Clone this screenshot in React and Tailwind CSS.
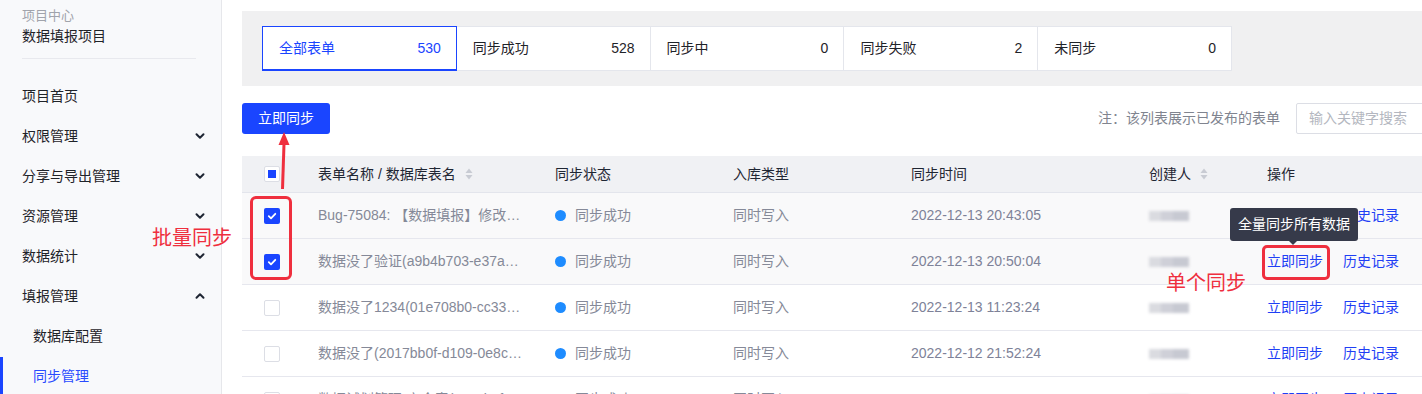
import { useState } from "react";

const FONT = { fontFamily: '"Liberation Sans", "Noto Sans CJK SC", sans-serif' };

const tabs = [
  { label: "全部表单", count: 530 },
  { label: "同步成功", count: 528 },
  { label: "同步中", count: 0 },
  { label: "同步失败", count: 2 },
  { label: "未同步", count: 0 },
];

const rows = [
  { name: "Bug-75084: 【数据填报】修改表单后同步", time: "2022-12-13 20:43:05", checked: true },
  { name: "数据没了验证(a9b4b703-e37a-4c1b-9d2e)", time: "2022-12-13 20:50:04", checked: true },
  { name: "数据没了1234(01e708b0-cc33-4f1a-8e0b)", time: "2022-12-13 11:23:24", checked: false },
  { name: "数据没了(2017bb0f-d109-0e8c-41ab-9c0d)", time: "2022-12-12 21:52:24", checked: false },
  { name: "数据试划管理-安全表(c2a1b7f0-88de)", time: "2022-12-12 20:11:39", checked: false },
];

const menu = [
  { label: "项目首页" },
  { label: "权限管理", chevron: "down" },
  { label: "分享与导出管理", chevron: "down" },
  { label: "资源管理", chevron: "down" },
  { label: "数据统计", chevron: "down" },
  { label: "填报管理", chevron: "up" },
];

function Chevron({ up }) {
  return (
    <svg width="12" height="12" viewBox="0 0 12 12" className={up ? "rotate-180" : ""}>
      <path d="M2.5 4.2 6 7.7l3.5-3.5" fill="none" stroke="#1f2633" strokeWidth="2" strokeLinecap="round" strokeLinejoin="round" />
    </svg>
  );
}

function SortIcon() {
  return (
    <svg width="10" height="14" viewBox="0 0 10 14" className="ml-2">
      <path d="M5 1.5 8.5 6h-7z" fill="#c8cbd3" />
      <path d="M5 12.5 1.5 8h7z" fill="#c8cbd3" />
    </svg>
  );
}

function Checkbox({ checked }) {
  if (checked) {
    return (
      <span className="w-4 h-4 rounded-[2px] bg-[#1a45ff] flex items-center justify-center">
        <svg width="10" height="10" viewBox="0 0 10 10">
          <path d="M1.8 5.2 4 7.3 8.3 2.8" fill="none" stroke="#fff" strokeWidth="1.8" strokeLinecap="round" strokeLinejoin="round" />
        </svg>
      </span>
    );
  }
  return <span className="w-4 h-4 rounded-[2px] border border-[#dcdee5] bg-white" />;
}

function Blurred() {
  return (
    <div className="flex items-center blur-[1.5px]">
      <span className="w-[12px] h-[10px] bg-[#dadbe0]" />
      <span className="w-[12px] h-[10px] bg-[#cfd0d8]" />
      <span className="w-[16px] h-[10px] bg-[#c7c9d2]" />
    </div>
  );
}

export default function App() {
  const [active, setActive] = useState(0);

  return (
    <div className="relative flex w-[1422px] h-[394px] overflow-hidden bg-white text-[14px]" style={FONT}>
      {/* Sidebar */}
      <aside className="w-[222px] shrink-0 bg-[#f8f9fb] border-r border-[#e6e7eb]">
        <div className="px-[22px] pt-[7px]">
          <div className="text-[13px] leading-[18px] text-[#a0a3ab]">项目中心</div>
          <div className="text-[14px] leading-[22px] text-[#1f2329]">数据填报项目</div>
          <div className="mt-[11px] mr-[3px] border-t border-[#e8e9ee]" />
        </div>
        <nav className="mt-[17px]">
          {menu.map((m) => (
            <div key={m.label} className="h-10 flex items-center justify-between pl-[22px] pr-[15px] text-[#1f2329]">
              <span>{m.label}</span>
              {m.chevron && <Chevron up={m.chevron === "up"} />}
            </div>
          ))}
          <div className="h-10 flex items-center pl-[33px] text-[#1f2329]">数据库配置</div>
          <div className="relative h-10 flex items-center pl-[33px] text-[#2a4bff]">
            <span className="absolute left-0 top-[1px] bottom-0 w-[3px] bg-[#1a45ff]" />
            同步管理
          </div>
        </nav>
      </aside>

      {/* Main */}
      <main className="flex-1 overflow-hidden pl-5 pt-[11px]">
        <div className="w-[1200px]">
          <div className="bg-[#f0f0f1] px-5 py-[15px]">
            <div className="flex w-[970px] bg-white">
              {tabs.map((t, i) => (
                <button
                  key={t.label}
                  onClick={() => setActive(i)}
                  className={
                    i === active
                      ? "flex-1 h-[45px] flex items-center justify-between pl-4 pr-[15px] border border-b-2 border-[#1a45ff] text-[#1a45ff]"
                      : "flex-1 h-[45px] flex items-center justify-between pl-4 pr-[15px] border-y border-r border-[#e4e6ec] text-[#1f2329]"
                  }
                >
                  <span>{t.label}</span>
                  <span>{t.count}</span>
                </button>
              ))}
            </div>
          </div>

          <div className="flex items-center justify-between mt-[17px]">
            <button className="h-[31px] w-[88px] rounded-[3px] bg-[#1a45ff] text-white">立即同步</button>
            <div className="flex items-center">
              <span className="text-[#80848f] mr-4">注：该列表展示已发布的表单</span>
              <div className="w-[146px] h-[31px] border border-[#dcdee5] rounded-[2px] flex items-center px-3 text-[#b4b7c0]">
                输入关键字搜索
              </div>
            </div>
          </div>

          {/* Table */}
          <div className="mt-[22px]">
            <div className="grid grid-cols-[60px_237px_178px_178px_238px_118px_1fr] h-[37px] bg-[#f0f1f4] border-b border-[#e3e5ec] items-center text-[#1f2633]">
              <div className="flex justify-center">
                <span className="w-4 h-4 rounded-[2px] border border-[#dcdee5] bg-white flex items-center justify-center">
                  <span className="w-2 h-2 bg-[#1a45ff]" />
                </span>
              </div>
              <div className="flex items-center px-4">表单名称 / 数据库表名<SortIcon /></div>
              <div className="px-4">同步状态</div>
              <div className="px-4">入库类型</div>
              <div className="px-4">同步时间</div>
              <div className="flex items-center px-4">创建人<SortIcon /></div>
              <div className="px-4">操作</div>
            </div>
            {rows.map((r) => (
              <div
                key={r.name}
                className={
                  "grid grid-cols-[60px_237px_178px_178px_238px_118px_1fr] h-[46px] border-b border-[#e6e7ee] items-center text-[#858998] " +
                  (r.checked ? "bg-[#f9f9fa]" : "bg-white")
                }
              >
                <div className="flex justify-center">
                  <Checkbox checked={r.checked} />
                </div>
                <div className="px-4 truncate">{r.name}</div>
                <div className="px-4 flex items-center">
                  <span className="w-[11px] h-[11px] rounded-full bg-[#1e8cff] mr-[9px]" />
                  同步成功
                </div>
                <div className="px-4">同时写入</div>
                <div className="px-4 text-[#7e8298]">{r.time}</div>
                <div className="px-4">
                  <Blurred />
                </div>
                <div className="px-4 flex gap-5 text-[#1f3ff5]">
                  <span>立即同步</span>
                  <span>历史记录</span>
                </div>
              </div>
            ))}
          </div>
        </div>
      </main>

      {/* Annotations */}
      <div className="absolute left-[1230px] top-[208px] w-[128px] h-[33px] rounded-[3px] bg-[#363a4a] text-white flex items-center justify-center">
        全量同步所有数据
        <span className="absolute left-[58px] -bottom-[4px] w-0 h-0 border-x-[5px] border-x-transparent border-t-[5px] border-t-[#363a4a]" />
      </div>
      <div className="absolute left-[1262px] top-[245px] w-[68px] h-[35px] border-[3px] border-[#ef2f3e] rounded-[5px]" />
      <div className="absolute left-[1166px] top-[272px] text-[20px] leading-[22px] text-[#ef2f3e]">单个同步</div>

      <div className="absolute left-[250px] top-[196px] w-[42px] h-[84px] border-[3px] border-[#ef2f3e] rounded-[6px]" />
      <div className="absolute left-[152px] top-[227px] text-[20px] leading-[22px] text-[#ef2f3e]">批量同步</div>
      <svg className="absolute left-[274px] top-[130px]" width="20" height="62" viewBox="0 0 20 62">
        <path d="M10 2 15.5 15h-11z" fill="#ef2f3e" />
        <path d="M10 14 8.5 59" stroke="#ef2f3e" strokeWidth="3" />
      </svg>
    </div>
  );
}
